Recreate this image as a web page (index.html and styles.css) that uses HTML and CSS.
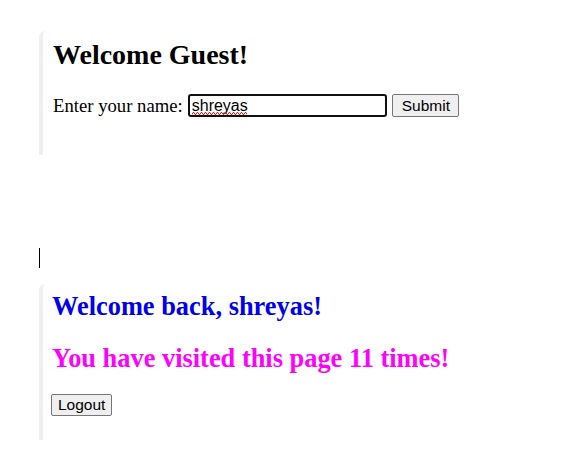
FILE: index.html
```html
<!DOCTYPE html>
<html>
<head>
<meta charset="utf-8">
<link rel="stylesheet" href="styles.css">
</head>
<body>
<div class="page">
  <section class="card card-guest">
    <h2 class="title">Welcome Guest!</h2>
    <form class="row">
      <label class="label" for="name">Enter your name:</label>
      <span class="field-wrap">
        <input class="field" id="name" type="text" value="shreyas" spellcheck="false">
      </span>
      <button class="btn" type="button">Submit</button>
    </form>
  </section>
  <div class="caret-line"><span class="caret"></span></div>
  <section class="card card-user">
    <h2 class="title title-blue">Welcome back, shreyas!</h2>
    <h2 class="title title-pink">You have visited this page 11 times!</h2>
    <button class="btn btn-logout" type="button">Logout</button>
  </section>
</div>
</body>
</html>
```
FILE: styles.css
```css
html, body {
  margin: 0;
  padding: 0;
  background: #ffffff;
}
body {
  font-family: "Liberation Serif", "Times New Roman", serif;
  font-size: 18.7px;
  color: #000;
}
.page {
  padding: 31px 0 0 39px;
}
.card {
  border-left: 4px solid #efefef;
  border-top-left-radius: 6px;
  padding: 0 0 0 10px;
  box-sizing: border-box;
}
.card-guest {
  height: 124px;
  padding-top: 8px;
}
.card-user {
  height: 156px;
  padding-top: 6px;
  padding-left: 9px;
}
.title {
  font-size: 28px;
  font-weight: bold;
  margin: 0 0 23px 0;
  line-height: 32px;
}
.title-blue { color: #0000ee; font-size: 26.4px; margin-bottom: 20px; }
.title-pink { color: #ff00ff; font-size: 26.4px; margin-bottom: 19px; }
.row {
  display: flex;
  align-items: center;
  margin: 0;
}
.label {
  margin-right: 5px;
}
.field-wrap {
  position: relative;
  display: inline-flex;
}
.field-wrap::after {
  content: "";
  position: absolute;
  left: 4px;
  bottom: 2px;
  width: 55px;
  height: 3px;
  background-image: url("data:image/svg+xml;utf8,<svg xmlns='http://www.w3.org/2000/svg' width='4' height='3'><polyline points='0,2.5 1,0.5 2,0.5 3,2.5 4,2.5' fill='none' stroke='%23e02020' stroke-width='1'/></svg>");
  background-repeat: repeat-x;
  background-size: 4px 3px;
  pointer-events: none;
}
.field {
  width: 199px;
  height: 23px;
  box-sizing: border-box;
  border: 2px solid #111;
  border-radius: 3px;
  padding: 0 2px;
  font-family: "Liberation Sans", Arial, sans-serif;
  font-size: 16px;
  color: #000;
  outline: none;
  margin: 0;
}
.btn {
  font-family: "Liberation Sans", Arial, sans-serif;
  font-size: 15.5px;
  background: #efefef;
  border: 1px solid #767676;
  border-radius: 2px;
  height: 23px;
  padding: 0 8px 0 9px;
  color: #000;
  margin: 0 0 0 5px;
}
.btn-logout {
  margin-left: -1px;
  height: 22px;
  padding: 0 6px;
}
.caret-line {
  height: 129px;
  display: flex;
  align-items: center;
}
.caret {
  display: block;
  width: 1px;
  height: 20px;
  background: #000;
  margin-top: 76px;
}
```
